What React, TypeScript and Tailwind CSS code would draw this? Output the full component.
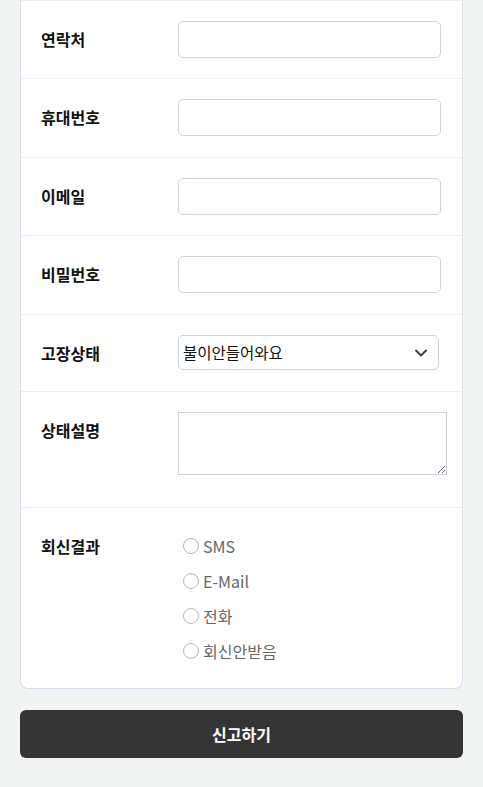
import React from "react";
import { ChevronDown } from "lucide-react";

const FONT = { fontFamily: '"Noto Sans CJK KR", "Noto Sans", sans-serif' };

// ── Row wrapper ───────────────────────────────────────────────────────────────
const Row: React.FC<{ label: string; children: React.ReactNode; last?: boolean; className?: string }> = ({
  label,
  children,
  last = false,
  className = "",
}) => (
  <div className={`flex px-5 pt-5 ${last ? "pb-5" : "border-b border-[#eef0f2]"} ${className}`}>
    <div className="w-[137px] shrink-0 h-9 flex items-center text-[16px] font-bold text-[#111]">{label}</div>
    <div className="flex-1">{children}</div>
  </div>
);

const TextInput = () => (
  <input
    type="text"
    className="block w-[263px] h-[37px] rounded-[5px] border border-[#cdd3e0] bg-white px-2 text-[15px] outline-none"
  />
);

const RADIOS = ["SMS", "E-Mail", "전화", "회신안받음"];

export default function App() {
  return (
    <div className="min-h-screen bg-[#f2f3f3] px-5 pb-[30px]" style={FONT}>
      {/* ================= FORM CARD ================= */}
      <div className="bg-white border-x border-b border-[#d5dbe8] rounded-b-lg">
        <div className="h-px bg-[#eef0f2]" />
        <Row label="연락처" className="pb-5">
          <TextInput />
        </Row>
        <Row label="휴대번호" className="pb-[21px]">
          <TextInput />
        </Row>
        <Row label="이메일" className="pb-5">
          <TextInput />
        </Row>
        <Row label="비밀번호" className="pb-[21px]">
          <TextInput />
        </Row>

        <Row label="고장상태" className="pb-5">
          <div className="relative w-[261px] h-[35px]">
            <select className="appearance-none w-full h-full rounded-[5px] border border-[#cdd3e0] bg-white pl-1 text-[15.5px] text-[#111] outline-none">
              <option>불이안들어와요</option>
            </select>
            <ChevronDown
              className="absolute right-[8px] top-[8px] w-5 h-5 text-[#444] pointer-events-none"
              strokeWidth={2.5}
            />
          </div>
        </Row>

        <Row label="상태설명" className="pb-[32px]">
          <textarea className="block w-[269px] h-[63px] border border-[#cdd3e0] bg-white outline-none" />
        </Row>

        <Row label="회신결과" last>
          <div className="flex flex-col pl-[5px]">
            {RADIOS.map((r) => (
              <label key={r} className="h-[35px] flex items-center gap-1 text-[16px] text-[#666]">
                <span className="w-4 h-4 rounded-full border border-[#b8b8b8] bg-white" />
                {r}
              </label>
            ))}
          </div>
        </Row>
      </div>

      {/* ================= SUBMIT ================= */}
      <button className="mt-[21px] w-full h-12 rounded-md bg-[#353535] text-white text-[16px] font-bold">
        신고하기
      </button>
    </div>
  );
}
